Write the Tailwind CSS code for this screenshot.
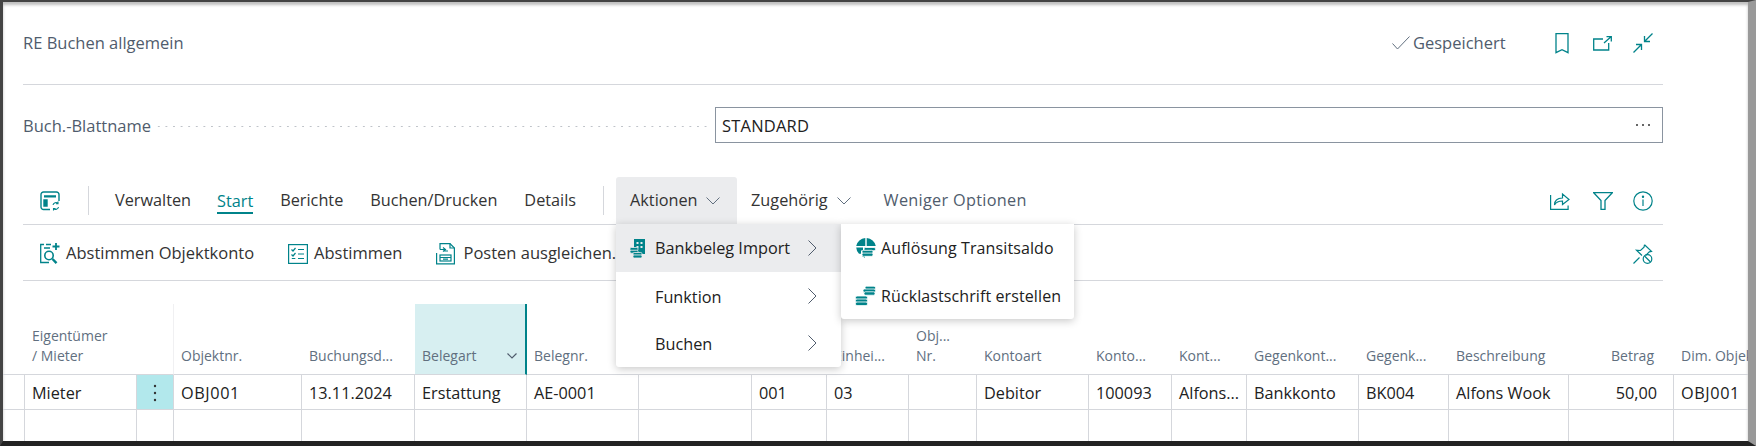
<!DOCTYPE html>
<html lang="de">
<head>
    <meta charset="UTF-8">
    <title>RE Buchen allgemein</title>
    <script src="https://cdn.jsdelivr.net/npm/@tailwindcss/browser@4"></script>
</head>
<body class="bg-white font-['Open_Sans',sans-serif] text-[#212121]">
<div class="relative w-[1756px] h-[446px] overflow-hidden bg-white border-t-2 border-t-[#444] border-l-[3px] border-l-[#444] border-r-8 border-r-[#999] border-b-[5px] border-b-[#222] shadow-[inset_0_3px_3px_rgba(0,0,0,0.25)]">

    <!-- Kopfzeile -->
    <header class="ml-5 w-[1640px] h-[83px] border-b border-[#d5d7dc] flex items-center text-[#505c6d] text-[16.500px]">
        <h1 class="font-normal">RE Buchen allgemein</h1>
        <div class="ml-auto flex items-center">
            <svg class="w-[18px] h-[14px]" viewBox="0 0 18 14" fill="none" stroke="#616f7f"><path d="M0.500 7.500l5 5.500L17.500 0.500"/></svg>
            <span class="ml-[3px] w-[142px]">Gespeichert</span>
            <svg class="w-[14px] h-[21px]" viewBox="0 0 14 21" fill="none" stroke="#00838a" stroke-width="1.300"><path d="M1 0.700h12v19l-6-3-6 3z"/></svg>
            <svg class="ml-6 w-[19px] h-[15px]" viewBox="0 0 19 15" fill="none" stroke="#00838a" stroke-width="1.300"><path d="M10 3H0.700v11h15V7M11 7l7-6.300M13.500 0.700h4.800v4.800"/></svg>
            <svg class="ml-[21px] mr-[10px] w-5 h-5" viewBox="0 0 20 20" fill="none" stroke="#00838a" stroke-width="1.300"><path d="M19.500 0.500l-8 8M11.500 3v5.500H17M0.500 19.500l8-8M3 11.500h5.500V17"/></svg>
        </div>
    </header>

    <!-- Feld Buch.-Blattname -->
    <div class="ml-5 w-[1640px] h-9 mt-[22px] flex items-center text-[16.500px] text-[#505c6d]">
        <label class="pt-[2px]">Buch.-Blattname</label>
        <div class="flex-1 mx-1 mt-[2px] h-[3px] bg-[radial-gradient(circle,#bfc3c9_1px,transparent_1px)] bg-[length:7.600px_3px]"></div>
        <div class="w-[948px] h-9 border border-[#8a94a0] flex items-center pl-[6px] pr-3 text-[#212121]">
            <span class="pt-[2px] tracking-[0.2px]">STANDARD</span>
            <span class="ml-auto flex gap-1">
                <i class="w-[2px] h-[2px] rounded-full bg-[#333]"></i>
                <i class="w-[2px] h-[2px] rounded-full bg-[#333]"></i>
                <i class="w-[2px] h-[2px] rounded-full bg-[#333]"></i>
            </span>
        </div>
    </div>

    <!-- Menüleiste -->
    <nav class="ml-5 w-[1640px] h-[48px] mt-[34px] border-b border-[#d5d7dc] flex items-center text-[16.250px] text-[#333]">
        <svg class="ml-[17px] w-5 h-5" viewBox="0 0 20 20" fill="none" stroke="#00838a" stroke-width="1.400">
            <path d="M10 18.500H3.500a2.500 2.500 0 0 1-2.500-2.500V3.500A2.500 2.500 0 0 1 3.500 1h13A2.500 2.500 0 0 1 19 3.500V10"/>
            <path d="M4 5h12M4 5.700h12" stroke-width="1.500"/>
            <path d="M4 9h3v6H4z" fill="#00838a"/>
            <path d="M13 14a3 3 0 0 1 5-1.500M18.500 16a3 3 0 0 1-5 1.500M18 10.500v2.200h-2M13.500 19.500v-2h2" stroke-width="1.100"/>
        </svg>
        <div class="ml-[28px] w-px h-[29px] bg-[#d5d7dc]"></div>
        <a class="ml-[26px]">Verwalten</a>
        <a class="ml-[26px] h-[27px] pt-[3px] leading-[22px] text-[#00838a] border-b-2 border-[#00838a]">Start</a>
        <a class="ml-[27px]">Berichte</a>
        <a class="ml-[27px]">Buchen/Drucken</a>
        <a class="ml-[27px]">Details</a>
        <div class="ml-[27px] w-px h-[29px] bg-[#d5d7dc]"></div>
        <a class="ml-[12px] w-[121px] h-full bg-[#ebecee] rounded-t-[3px] flex items-center pl-[14px]">Aktionen
            <svg class="ml-2 w-[14px] h-2" viewBox="0 0 14 8" fill="none" stroke="#616f7f"><path d="M0.500 0.500L7 7l6.500-6.500"/></svg>
        </a>
        <a class="ml-[14px] flex items-center">Zugehörig
            <svg class="ml-[9px] w-[14px] h-2" viewBox="0 0 14 8" fill="none" stroke="#616f7f"><path d="M0.500 0.500L7 7l6.500-6.500"/></svg>
        </a>
        <a class="ml-[33px] text-[#505c6d] tracking-[0.3px]">Weniger Optionen</a>
        <div class="ml-auto flex items-center">
            <svg class="w-5 h-[18px]" viewBox="0 0 20 18" fill="none" stroke="#00838a" stroke-width="1.200"><path d="M0.600 3v14.400h17.500v-4M4.500 13c0-4.500 3-7 8-7V2l6.500 5.500L12.500 12.500V9c-4 0-6.500 1.200-8 4z"/></svg>
            <svg class="ml-[23px] w-5 h-[18px]" viewBox="0 0 20 18" fill="none" stroke="#00838a" stroke-width="1.300"><path d="M0.700 0.700h18.600L12 8.500v8.800H8V8.500z"/></svg>
            <svg class="ml-5 mr-[10px] w-5 h-5" viewBox="0 0 20 20" fill="none" stroke="#00838a" stroke-width="1.200"><circle cx="10" cy="10" r="9.200"/><path d="M10 8.500v6.500"/><circle cx="10" cy="5.700" r="0.600" fill="#00838a"/></svg>
        </div>
    </nav>

    <!-- Aktionsleiste -->
    <div class="ml-5 w-[1640px] h-[56px] pt-[2px] border-b border-[#d5d7dc] flex items-center text-[16.500px] text-[#333]">
        <svg class="ml-[17px] w-5 h-[21px]" viewBox="0 0 20 21" fill="none" stroke="#00838a" stroke-width="1.300">
            <path d="M4 1.500H0.700v18H9M4 5h6M6 1.500h5"/>
            <path d="M16 0v7M12.500 3.500h7" stroke-width="1.800"/>
            <circle cx="9" cy="12.500" r="4.200" stroke-width="1.600"/>
            <path d="M12.500 16l4 4.200" stroke-width="2.400"/>
        </svg>
        <span class="ml-[6px]">Abstimmen Objektkonto</span>
        <svg class="ml-[34px] w-5 h-5" viewBox="0 0 20 20" fill="none" stroke="#00838a" stroke-width="1.200">
            <rect x="0.600" y="0.600" width="18.800" height="18.800"/>
            <path d="M10 5.500h6M10 10h6M10 14.500h6M3.500 5.500l1.500 1.500 2.500-3M3.500 10.500l1.500 1.500 2.500-3M3.800 14.500h3.500"/>
        </svg>
        <span class="ml-[6px]">Abstimmen</span>
        <svg class="ml-[34px] w-[19px] h-[22px]" viewBox="0 0 19 22" fill="none" stroke="#00838a" stroke-width="1.200">
            <path d="M4 6.500V0.600h10l4.400 4.400v15.900H0.600V10"/><path d="M14 0.600V5h4.400"/>
            <path d="M4 6.500h5M7 4.500l2.500 2-2.500 2M12 8H8.500" stroke-width="1.100"/>
            <rect x="4" y="12" width="11" height="6"/><path d="M4 14.500h11M7 16.200h5"/>
        </svg>
        <span class="ml-2 whitespace-nowrap">Posten ausgleichen...</span>
        <svg class="ml-auto mr-[10px] w-5 h-5" viewBox="0 0 20 20" fill="none" stroke="#00838a" stroke-width="1.200">
            <path d="M0.500 19.500l6-6M11.500 0.800l7 6.500-2.200.5-3.500 3.500M11.500 0.800l-.5 2.500L7.500 6.500l-4-.2L9 11.500"/>
            <circle cx="14.500" cy="15" r="4.300"/><path d="M11.500 12l6 6"/>
        </svg>
    </div>

    <!-- Tabelle -->
    <div class="mt-[23px] grid grid-cols-[22px_112px_37px_128px_113px_112px_112px_113px_75px_82px_68px_112px_83px_75px_112px_90px_120px_105px_120px] grid-rows-[71px_35px_35px] text-[16.250px]">
        <div class="col-span-full grid grid-cols-subgrid *:border-b *:border-b-[#d5d7dc] *:flex *:items-end *:pb-2 *:pl-[7px] *:text-[#616f7f] *:text-[14px] *:leading-[20px] *:whitespace-nowrap *:overflow-hidden">
            <div></div>
            <div>Eigentümer<br>/ Mieter</div>
            <div class="border-r border-r-[#f0f0f2]"></div>
            <div>Objektnr.</div>
            <div>Buchungsd...</div>
            <div class="bg-[#d7eff1] border-r-2 border-r-[#00838a] relative">Belegart
                <svg class="absolute right-[8px] bottom-[15px] w-[10px] h-[6px]" viewBox="0 0 10 6" fill="none" stroke="#505c6d" stroke-width="1.200"><path d="M0.500 0.500L5 5l4.500-4.500"/></svg>
            </div>
            <div>Belegnr.</div>
            <div></div>
            <div></div>
            <div>Einhei...</div>
            <div>Obj...<br>Nr.</div>
            <div>Kontoart</div>
            <div>Konto...</div>
            <div>Kont...</div>
            <div>Gegenkont...</div>
            <div>Gegenk...</div>
            <div>Beschreibung</div>
            <div class="justify-end !pr-[20px]">Betrag</div>
            <div>Dim. Objekt</div>
        </div>
        <div class="col-span-full grid grid-cols-subgrid *:border-r *:border-b *:border-[#d5d7dc] *:flex *:items-center *:pt-[2px] *:pl-[7px] *:whitespace-nowrap *:overflow-hidden">
            <div></div>
            <div>Mieter</div>
            <div class="bg-[#b2e8ec] justify-center !pl-0">
                <svg class="w-1 h-[18px]" viewBox="0 0 4 18" fill="#333"><circle cx="2" cy="2" r="1.200"/><circle cx="2" cy="9" r="1.200"/><circle cx="2" cy="16" r="1.200"/></svg>
            </div>
            <div class="tracking-[0.6px]">OBJ001</div>
            <div>13.11.2024</div>
            <div>Erstattung</div>
            <div>AE-0001</div>
            <div></div>
            <div>001</div>
            <div>03</div>
            <div></div>
            <div>Debitor</div>
            <div>100093</div>
            <div>Alfons...</div>
            <div>Bankkonto</div>
            <div>BK004</div>
            <div>Alfons Wook</div>
            <div class="justify-end !pr-4">50,00</div>
            <div class="tracking-[0.6px]">OBJ001</div>
        </div>
        <div class="col-span-full grid grid-cols-subgrid *:border-r *:border-b *:border-[#d5d7dc]">
            <div></div><div></div><div></div><div></div><div></div><div></div><div></div><div></div><div></div><div></div>
            <div></div><div></div><div></div><div></div><div></div><div></div><div></div><div></div><div></div>
        </div>
    </div>

    <!-- Menü Aktionen -->
    <div class="absolute left-[613px] top-[222px] w-[225px] bg-white rounded-b-[3px] shadow-[0_2px_8px_rgba(0,0,0,0.22)] text-[16.250px]">
        <div class="h-[48px] bg-[#ebecee] flex items-center pl-[14px] pr-6">
            <svg class="w-4 h-[19px]" viewBox="0 0 16 19">
                <path fill="#00838a" fill-rule="evenodd" d="M4 0h11v15H4zM6.500 3v2h2V3zm4 0v2h2V3zM6.500 7v2h2V7zm4 0v2h2V7z"/>
                <g fill="#00838a" stroke="#ebecee" stroke-width="0.800">
                    <rect x="0" y="8.500" width="8" height="3" rx="1.200"/>
                    <rect x="0" y="11.200" width="8" height="3" rx="1.200"/>
                    <rect x="3" y="13.500" width="9" height="2.800" rx="1.200"/>
                    <rect x="3" y="16" width="9" height="3" rx="1.200"/>
                </g>
            </svg>
            <span class="ml-[9px]">Bankbeleg Import</span>
            <svg class="ml-auto w-[9px] h-4" viewBox="0 0 9 16" fill="none" stroke="#505c6d"><path d="M0.500 0.500L8 8l-7.500 7.500"/></svg>
        </div>
        <div class="h-[47px] flex items-center pl-[39px] pr-6"><span class="pt-[3px]">Funktion</span>
            <svg class="ml-auto w-[9px] h-4" viewBox="0 0 9 16" fill="none" stroke="#505c6d"><path d="M0.500 0.500L8 8l-7.500 7.500"/></svg>
        </div>
        <div class="h-[48px] flex items-center pl-[39px] pr-6"><span class="pt-[2px]">Buchen</span>
            <svg class="ml-auto w-[9px] h-4" viewBox="0 0 9 16" fill="none" stroke="#505c6d"><path d="M0.500 0.500L8 8l-7.500 7.500"/></svg>
        </div>
    </div>
    <div class="absolute left-[838px] top-[222px] w-[233px] h-[95px] bg-white rounded-b-[3px] shadow-[0_2px_8px_rgba(0,0,0,0.22)] text-[16px]">
        <div class="h-[48px] flex items-center pl-[15px]">
            <svg class="w-5 h-5" viewBox="0 0 20 20">
                <path fill="#00838a" d="M9.300 0.100V8H0.200A9.800 9.800 0 0 1 9.300 0.100zM10.700 0.100A9.800 9.800 0 0 1 19.800 8H10.700zM0.200 9.500H7v3H5v3.300H3A10 10 0 0 1 0.200 9.500z"/>
                <path fill="#00838a" d="M6 18a10 10 0 0 0 3 1.800V18z"/>
                <g fill="#00838a" stroke="#fff" stroke-width="0.800">
                    <rect x="8" y="9.500" width="11.500" height="3.200" rx="1.400"/>
                    <rect x="6" y="12.300" width="11" height="3.200" rx="1.400"/>
                    <rect x="6" y="15.100" width="11" height="3.200" rx="1.400"/>
                </g>
            </svg>
            <span class="ml-[5px] tracking-[0.1px]">Auflösung Transitsaldo</span>
        </div>
        <div class="h-[47px] flex items-center pl-[14px]">
            <svg class="w-[21px] h-5" viewBox="0 0 21 20">
                <g fill="#00838a" stroke="#fff" stroke-width="0.800">
                    <rect x="10" y="0.200" width="10.500" height="3.400" rx="1.500"/>
                    <rect x="8" y="3" width="12.500" height="3.400" rx="1.500"/>
                    <rect x="9" y="5.800" width="11" height="3.400" rx="1.500"/>
                    <rect x="0.500" y="10" width="12" height="3.400" rx="1.500"/>
                    <rect x="0.500" y="13" width="12" height="3.400" rx="1.500"/>
                    <rect x="0.500" y="16" width="12" height="3.600" rx="1.500"/>
                </g>
            </svg>
            <span class="ml-[5px] tracking-[0.1px]">Rücklastschrift erstellen</span>
        </div>
    </div>
</div>
</body>
</html>
